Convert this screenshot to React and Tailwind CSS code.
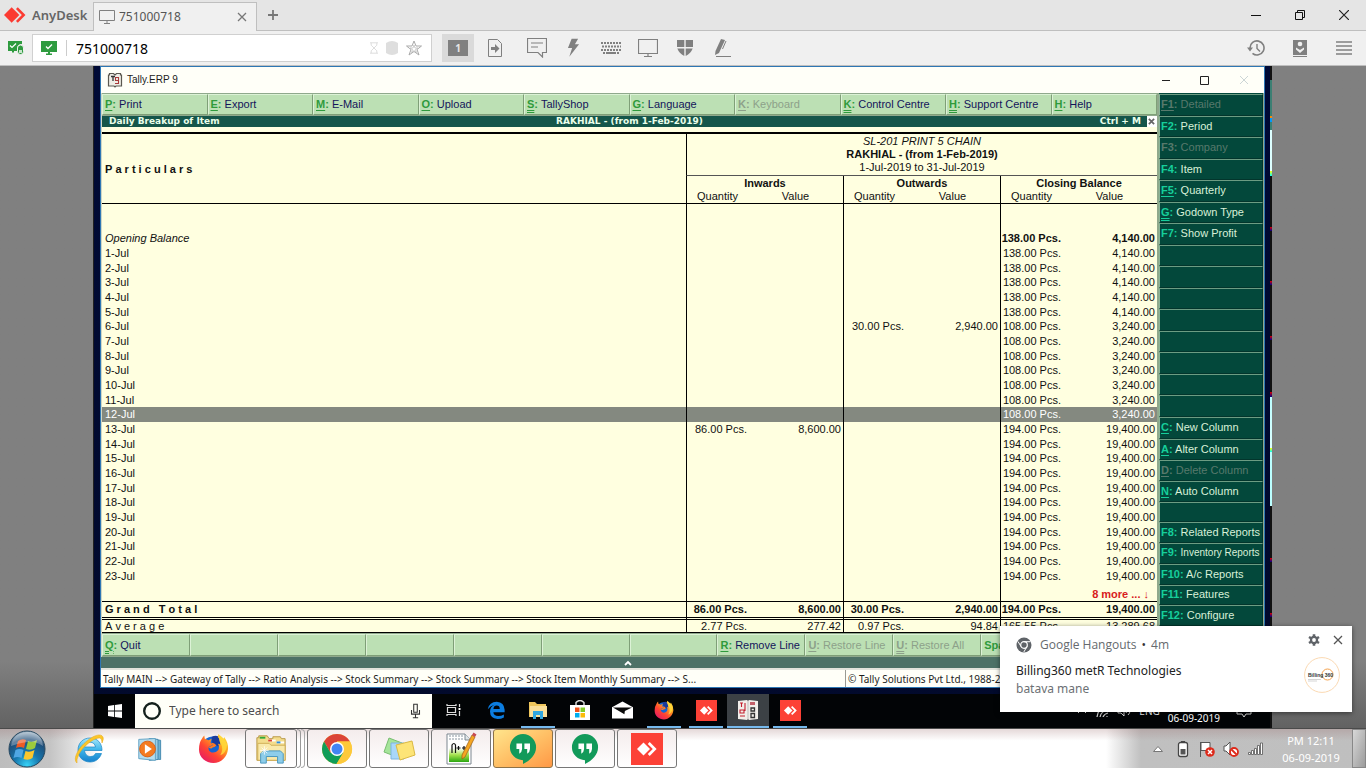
import React from 'react';

const AnyDeskMark = ({ className, fill = '#fff' }) => (
  <svg viewBox="0 0 24 16" className={className} aria-hidden="true">
    <path d="M8 0l8 8-8 8-8-8z" fill={fill} />
    <path d="M12.5 1.8L14.4 0l8 8-8 8-1.9-1.8L18.6 8z" fill={fill} />
  </svg>
);

const AnyDeskTile = ({ className }) => (
  <svg viewBox="0 0 32 32" className={className} aria-hidden="true">
    <rect width="32" height="32" fill="#fc4136" />
    <path d="M12.5 9.5L19 16l-6.500 6.500L6 16z" fill="#fff" />
    <path d="M16.800 11l1.900-1.900 6.900 6.900-6.900 6.900-1.900-1.900 5-5z" fill="#fff" />
  </svg>
);

const Firefox = ({ className, id }) => (
  <svg viewBox="0 0 32 32" className={className} aria-hidden="true">
    <defs>
      <linearGradient id={id} x1="1" y1="0" x2="0.15" y2="1">
        <stop offset="0" stopColor="#fff04a" />
        <stop offset="0.35" stopColor="#ffa51f" />
        <stop offset="0.65" stopColor="#ff4531" />
        <stop offset="1" stopColor="#e4156b" />
      </linearGradient>
    </defs>
    <circle cx="15.500" cy="15" r="11.500" fill="#1464d2" />
    <path d="M14 4q6-3 11 2l-4 8-6-3z" fill="#1a3b9c" />
    <path d="M4 6q1-2 2.500-3.500L7 6l4 1.500 3-1.500-1 4 2.500 2-4.500 2.500q-1 4 3 5.500 4 1 7-2.500 1.500-4-.5-6.500 1.500 0 2.500 1Q23 6 20.500 4.500L21 1q3 3 5.500 5l.5-2q4.500 6 4 12.500C30 25 24 31 16 31S1 25 1 17Q1 10 4 6z" fill={`url(#${id})`} />
    <path d="M11 15l4.500-2.500-2-2.500q4 0 5.500 3-2 2-4 2-1 2-4 0z" fill="#ff7a22" />
    <path d="M22 2q5 3 8 10-1 9-7 11 4-7 0-13-2-3-1-8z" fill="#ffd93b" opacity=".85" />
  </svg>
);

const EdgeE = ({ className }) => (
  <svg viewBox="0 0 24 24" className={className} aria-hidden="true">
    <path d="M1 11Q3 1 13 1q10 1 10.500 10.500V15H8.500q.5 5 6.500 5 4 0 7.500-2v4Q19 24 14 24 4 23 4 14q0-6 6-9-5 1-9 6zm7.500-.5H17q0-4.500-4-4.500t-4.500 4.500z" fill="#0b7de0" />
  </svg>
);

const IE = () => (
  <svg viewBox="0 0 32 32" className="h-8 w-8" aria-hidden="true">
    <defs>
      <linearGradient id="ieBlue" x1="0" y1="0" x2="0" y2="1">
        <stop offset="0" stopColor="#a8e8fb" />
        <stop offset="0.5" stopColor="#3bb4e9" />
        <stop offset="1" stopColor="#1681cd" />
      </linearGradient>
    </defs>
    <path d="M17 5c7.500 0 12 5 12 12.500H11.500c.5 4 3 6 6 6 2.500 0 4-1 5-3h6c-2 5.500-6 8.500-11.500 8.500C10 29 5 24 5 17S10 5 17 5zm-5.500 9h11c-.5-3-2.500-4.800-5.500-4.800s-5 1.800-5.500 4.800z" fill="url(#ieBlue)" stroke="#1a87c6" strokeWidth=".7" />
    <path d="M4 30C-1 26 6 14 14 8 21 2 28 0 30 4q1 2-1 6 0-4-2-5C22 4 10 13 6 21q-3 6-2 9z" fill="#fbc62a" stroke="#e6a413" strokeWidth=".5" />
  </svg>
);

const MediaPlayer = () => (
  <svg viewBox="0 0 32 32" className="h-7 w-7" aria-hidden="true">
    <path d="M17 5l10 1v22l-10-1z" fill="#6fb3d4" stroke="#3c83aa" />
    <path d="M14 4l10 1v23l-10 1z" fill="#9ccde4" stroke="#3c83aa" />
    <path d="M2 5l19-1v25L2 27z" fill="#b4dcee" stroke="#5a9dbf" />
    <circle cx="12" cy="16" r="9" fill="#f47b20" stroke="#d75d10" />
    <path d="M9 10.500l8 5.500-8 5.500z" fill="#fff" />
  </svg>
);

const Folder = ({ className }) => (
  <svg viewBox="0 0 34 34" className={className} aria-hidden="true">
    <path d="M2 29V5h2V3h9l2 3h4V4h8l1 2h4v23z" fill="#f3dc8c" stroke="#b89643" />
    <path d="M5 4h6v2H5z" fill="#31a93b" />
    <path d="M14 7h8v2h-8z" fill="#fff" /><path d="M14 7h4v2h-4z" fill="#d9432f" />
    <path d="M23 9h8v2h-8z" fill="#fff" /><path d="M23 9h4v2h-4z" fill="#2d8bdb" />
    <path d="M3 11h12l2 2h15v16H3z" fill="#f9e9ab" stroke="#cfae55" />
    <path d="M6 32V22l3-3h18l3 3v10h-6v-7H12v7z" fill="#8dcdea" stroke="#4594bd" />
    <path d="M10 14v9M5.500 18.500h9M7 15.500l6 6M13 15.500l-6 6" stroke="#fff" strokeWidth=".8" />
  </svg>
);

const FlatFolder = () => (
  <svg viewBox="0 0 20 18" className="h-[18px] w-5" aria-hidden="true">
    <path d="M1 16V1h6l2 2h9v13z" fill="#efc65c" />
    <path d="M2 5h17v11H2z" fill="#fbe09a" />
    <path d="M5 18v-8h10v8h-3v-4H8v4z" fill="#31a6df" />
  </svg>
);

const Chrome = () => (
  <svg viewBox="0 0 32 32" className="h-8 w-8" aria-hidden="true">
    <circle cx="16" cy="16" r="15" fill="#fdc93b" />
    <path d="M16 16L9.500 19.700 3 8.500A15 15 0 0 1 29 8.500H16z" fill="#db4437" />
    <path d="M3 8.500A15 15 0 0 0 15.500 31L22.500 19.500 16 16 9.500 19.700z" fill="#109d58" />
    <path d="M29 8.500H16v7l6.500 4L15.500 31A15 15 0 0 0 29 8.500z" fill="#fdc93b" />
    <circle cx="16" cy="16" r="7" fill="#fff" />
    <circle cx="16" cy="16" r="5.500" fill="#4285f4" />
  </svg>
);

const Notes = () => (
  <svg viewBox="0 0 34 28" className="h-7 w-[34px]" aria-hidden="true">
    <path d="M7 3l13 5-5 14L2 17z" fill="#a5e49a" stroke="#78bd70" />
    <path d="M9 8h13v16H9z" fill="#a9d7fa" stroke="#7fb5de" />
    <path d="M14 10l16-4 3 14-15 5z" fill="#fde477" stroke="#dbb943" />
  </svg>
);

const Notepad = () => (
  <svg viewBox="0 0 32 34" className="h-[34px] w-8" aria-hidden="true">
    <defs>
      <linearGradient id="nppGreen" x1="0" y1="0" x2="0" y2="1">
        <stop offset="0.3" stopColor="#fff" />
        <stop offset="0.65" stopColor="#a4e04c" />
        <stop offset="1" stopColor="#2aa611" />
      </linearGradient>
    </defs>
    <path d="M2 2h18l6 6v24H2z" fill="#fff" stroke="#7d8790" />
    <path d="M4 10h20v20H4z" fill="url(#nppGreen)" />
    <path d="M4 4h14M4 7h15" stroke="#8995a0" strokeDasharray="2 1" />
    <path d="M20 2v6h6" fill="#dfe5e8" stroke="#7d8790" />
    <path d="M7 21V13q2-3 3.500 0v8M11.500 16h4M13.500 14v4M17 16h4M19 14v4" fill="none" stroke="#111" strokeWidth="1.200" />
    <path d="M27 3l3 2-10 20-3 2v-4z" fill="#f5a623" stroke="#9b5d13" strokeWidth=".7" />
    <path d="M27 3l1.500-2.500 3 2L30 5z" fill="#c74a52" />
  </svg>
);

const Hangouts = () => (
  <svg viewBox="0 0 30 34" className="h-8 w-7" aria-hidden="true">
    <path d="M15 1a14 14 0 0 1 14 14c0 8-6 14-14 18v-4A14 14 0 0 1 15 1z" fill="#129a5a" />
    <path d="M8 11h6v6q0 3-3 5v-5H8zM16.500 11h6v6q0 3-3 5v-5h-3z" fill="#fff" />
  </svg>
);

const StartOrb = () => (
  <svg viewBox="0 0 38 38" className="h-[38px] w-[38px]" aria-hidden="true">
    <defs>
      <radialGradient id="orb" cx="0.5" cy="0.95" r="0.9">
        <stop offset="0" stopColor="#37d3f7" />
        <stop offset="0.4" stopColor="#1676ad" />
        <stop offset="0.8" stopColor="#1f4d78" />
        <stop offset="1" stopColor="#91a9bd" />
      </radialGradient>
    </defs>
    <circle cx="19" cy="19" r="18" fill="url(#orb)" stroke="#27485f" />
    <path d="M10 11q4-3 8-1l-2 8q-4-2-8 0z" fill="#ee5a24" />
    <path d="M20 11q4 2 9-1l-2 8q-4 3-9 1z" fill="#9bcb3c" />
    <path d="M7.500 20q4-2 8 0l-2 8q-4-2-8 0z" fill="#4fa6e3" />
    <path d="M17.500 21q4 2 9-1l-2 8q-4 3-9 1z" fill="#fcc62c" />
    <path d="M3 16Q5 3 19 2t16 14Q27 11 19 12T3 16z" fill="#fff" opacity=".3" />
  </svg>
);

const BookIcon = ({ className }) => (
  <svg viewBox="0 0 16 16" className={className} aria-hidden="true">
    <path d="M1.500 3h1V1.500h4L8 3l1.500-1.500h4V3h1v11H9l-1 1-1-1H1.500z" fill="#efeee6" stroke="#5a5850" strokeWidth="1.200" />
    <path d="M4 4.500h4M6 4.500V9" stroke="#333" strokeWidth="1.300" fill="none" />
    <path d="M11.500 8.500V5.500h-3v3h3v3H8" stroke="#a83a3a" strokeWidth="1.100" fill="none" />
  </svg>
);

const topKeys = [
  ['P', 'Print', 1], ['E', 'Export', 1], ['M', 'E-Mail', 1], ['O', 'Upload', 1], ['S', 'TallyShop', 2],
  ['G', 'Language', 1], ['K', 'Keyboard', 1, true], ['K', 'Control Centre', 2], ['H', 'Support Centre', 2], ['H', 'Help', 1],
];
const bottomKeys = [
  ['Q', 'Quit', 2], null, null, null, null, null, null, ['R', 'Remove Line', 1],
  ['U', 'Restore Line', 1, true], ['U', 'Restore All', 2, true], ['Space', '', 0], null,
];
const sideUpper = [
  ['F1', 'Detailed', 1, true], ['F2', 'Period', 0], ['F3', 'Company', 0, true], ['F4', 'Item', 0], ['F5', 'Quarterly', 1],
  ['G', 'Godown Type', 2], ['F7', 'Show Profit', 0], null, null, null, null, null, null, null, null,
  ['C', 'New Column', 1], ['A', 'Alter Column', 1],
];
const sideLower = [
  ['D', 'Delete Column', 1, true], ['N', 'Auto Column', 1], null, ['F8', 'Related Reports', 0],
  ['F9', 'Inventory Reports', 0], ['F10', 'A/c Reports', 0], ['F11', 'Features', 0], ['F12', 'Configure', 0],
];

const lines = ['', 'underline underline-offset-2', 'underline decoration-double underline-offset-2'];

function BarKey({ item }) {
  const [key, label, under, off] = item || [];
  return (
    <button disabled={!item || off} aria-label={item ? undefined : 'Unassigned'} className="flex min-w-0 flex-1 basis-0 items-center overflow-hidden whitespace-nowrap border-y border-l border-r border-t-[#dcf2d6] border-l-[#dcf2d6] border-r-[#7f9f78] border-b-[#7f9f78] bg-[#bce0b4] pb-px pl-[2px] text-left">
      {item && (
        <span className={off ? 'text-[#8da08a]' : 'text-[#14145a]'}>
          <span className={off ? 'font-bold' : 'font-bold text-[#2f9a3c]'}><span className={lines[under]}>{key}</span>:</span> {label}
        </span>
      )}
    </button>
  );
}

function SideKey({ item }) {
  const [key, label, under, off] = item || [];
  return (
    <button disabled={!item || off} aria-label={item ? undefined : 'Unassigned'} className="flex min-h-0 flex-1 basis-0 items-center overflow-hidden whitespace-nowrap border border-t-[#6c9c83] border-l-[#8ab598] border-r-[#02352c] border-b-[#02352c] bg-[#03483b] pb-px pl-px text-left">
      {item && (
        <span className={off ? 'text-[#57796c]' : 'text-[#d8f0d8]'}>
          <span className={off ? 'font-bold' : 'font-bold text-[#16cf9b]'}><span className={lines[under]}>{key}</span>:</span>{' '}
          <span className={label.length > 16 ? 'text-[10px]' : undefined}>{label}</span>
        </span>
      )}
    </button>
  );
}

const days = Array.from({ length: 23 }, (_, i) => {
  const d = i + 1;
  return {
    date: `${d}-Jul`,
    inQ: d === 13 ? '86.00 Pcs.' : '', inV: d === 13 ? '8,600.00' : '',
    outQ: d === 6 ? '30.00 Pcs.' : '', outV: d === 6 ? '2,940.00' : '',
    clQ: d < 6 ? '138.00 Pcs.' : d < 13 ? '108.00 Pcs.' : '194.00 Pcs.',
    clV: d < 6 ? '4,140.00' : d < 13 ? '3,240.00' : '19,400.00',
    active: d === 12,
  };
});

function Cells({ values }) {
  return values.map((v, i) => (
    <td key={i} className={i % 2 === 0 ? 'border-l border-black pr-px' : 'pr-[2px]'}>{v}</td>
  ));
}

function Report() {
  return (
    <table className="w-full table-fixed border-separate border-spacing-0 whitespace-nowrap text-right [&_td]:py-0 [&_th]:p-0">
      <colgroup>
        <col />
        <col className="w-[62px]" /><col className="w-[95px]" />
        <col className="w-[62px]" /><col className="w-[95px]" />
        <col className="w-[62px]" /><col className="w-[95px]" />
      </colgroup>
      <thead className="text-center">
        <tr className="h-[42px]">
          <th rowSpan="3" className="border-b border-black text-left"><span className="pl-[3px]">P&nbsp;a&nbsp;r&nbsp;t&nbsp;i&nbsp;c&nbsp;u&nbsp;l&nbsp;a&nbsp;r&nbsp;s</span></th>
          <th colSpan="6" className="border-b border-l border-b-[#555] border-l-black font-normal leading-[13px]">
            <div className="italic">SL-201 PRINT 5 CHAIN</div>
            <div className="font-bold">RAKHIAL - (from 1-Feb-2019)</div>
            <div>1-Jul-2019 to 31-Jul-2019</div>
          </th>
        </tr>
        <tr className="h-[14px]">
          <th colSpan="2" className="border-l border-black">Inwards</th>
          <th colSpan="2" className="border-l border-black">Outwards</th>
          <th colSpan="2" className="border-l border-black">Closing Balance</th>
        </tr>
        <tr className="h-[14px] leading-[13px]">
          {[0, 1, 2].map((n) => (
            <React.Fragment key={n}>
              <th className="border-b border-l border-black font-normal">Quantity</th>
              <th className="border-b border-black font-normal">Value</th>
            </React.Fragment>
          ))}
        </tr>
      </thead>
      <tbody>
        <tr className="h-[27px]"><td /><Cells values={['', '', '', '', '', '']} /></tr>
      </tbody>
      <tbody className="align-top [&>tr]:h-[15px] [&>tr:nth-child(3n)]:h-[14px]">
        <tr className="font-bold">
          <td className="pl-[3px] text-left font-normal italic">Opening Balance</td>
          <Cells values={['', '', '', '', '138.00 Pcs.', '4,140.00']} />
        </tr>
        {days.map((r) => (
          <tr key={r.date} className={r.active ? 'bg-[#848980] text-white' : ''}>
            <td className="pl-[3px] text-left">{r.date}</td>
            <Cells values={[r.inQ, r.inV, r.outQ, r.outV, r.clQ, r.clV]} />
          </tr>
        ))}
      </tbody>
      <tfoot>
        <tr className="h-[19px] [&>td]:border-b [&>td]:border-b-black">
          <td />
          <Cells values={['', '', '', '']} />
          <td colSpan="2" className="border-l border-black pr-[8px] align-bottom font-bold text-[#d8201c]">8 more ... ↓</td>
        </tr>
        <tr className="h-[18px] align-top font-bold [&>td]:border-b-[3px] [&>td]:border-b-black [&>td]:[border-bottom-style:double]">
          <td className="pl-[3px] text-left">G&nbsp;r&nbsp;a&nbsp;n&nbsp;d&nbsp;&nbsp;&nbsp;T&nbsp;o&nbsp;t&nbsp;a&nbsp;l</td>
          <Cells values={['86.00 Pcs.', '8,600.00', '30.00 Pcs.', '2,940.00', '194.00 Pcs.', '19,400.00']} />
        </tr>
        <tr className="h-[13px] leading-[12px] [&>td]:border-b [&>td]:border-b-black">
          <td className="pl-[3px] text-left">A&nbsp;v&nbsp;e&nbsp;r&nbsp;a&nbsp;g&nbsp;e</td>
          <Cells values={['2.77 Pcs.', '277.42', '0.97 Pcs.', '94.84', '165.55 Pcs.', '13,289.68']} />
        </tr>
      </tfoot>
    </table>
  );
}

function TallyWindow() {
  return (
    <section className="ml-[6px] mr-[7px] flex flex-col border border-[#2e77b4] bg-[#fffff8]">
      <header className="flex h-[26px] items-center pl-[6px]">
        <BookIcon className="h-4 w-4" />
        <h1 className="pl-1 text-[10px] text-[#222]">Tally.ERP 9</h1>
        <div className="ml-auto flex">
          <button aria-label="Minimise" className="grid w-[39px] place-items-center"><svg viewBox="0 0 10 10" className="h-[10px] w-[10px]"><path d="M1 5.500h8" stroke="#222" /></svg></button>
          <button aria-label="Maximise" className="grid w-[39px] place-items-center"><svg viewBox="0 0 10 10" className="h-[10px] w-[10px]"><path d="M.5 1.500h8v8h-8z" fill="none" stroke="#222" /></svg></button>
          <button aria-label="Close" className="grid w-[40px] place-items-center"><svg viewBox="0 0 10 10" className="h-[10px] w-[10px]"><path d="M1 1l8 8M9 1l-8 8" stroke="#ccd6d6" /></svg></button>
        </div>
      </header>
      <div className="flex border-l border-[#cfd6c4] bg-[#8fa98c]">
        <div className="flex min-w-0 flex-1 flex-col">
          <nav aria-label="Actions" className="flex h-[23px] py-px">
            {topKeys.map((k, i) => <BarKey key={i} item={k} />)}
          </nav>
          <div className="grid h-[11px] grid-cols-3 items-center bg-[#15564a] font-['DejaVu_Sans'] text-[9px] font-bold leading-none text-[#eaffea]">
            <span className="pl-[7px]">Daily Breakup of Item</span>
            <span className="text-center">RAKHIAL - (from 1-Feb-2019)</span>
            <span className="flex items-center justify-end gap-[6px]">Ctrl + M
              <button aria-label="Close report" className="grid h-[11px] w-[10px] place-items-center bg-white"><svg viewBox="0 0 8 8" className="h-[7px] w-[7px]"><path d="M1 1l6 6M7 1L1 7" stroke="#666" strokeWidth="2" /></svg></button>
            </span>
          </div>
          <div className="bg-[#ffffe0] pt-[5px] text-[#111]">
            <div className="border-t-2 border-black"><Report /></div>
          </div>
          <nav aria-label="Line actions" className="flex h-[24px] py-px">
            {bottomKeys.map((k, i) => <BarKey key={i} item={k} />)}
          </nav>
        </div>
        <aside className="ml-[2px] mr-px flex w-[104px] flex-col bg-[#03483b] pt-px">
          <div className="flex h-[366px] flex-col">{sideUpper.map((k, i) => <SideKey key={i} item={k} />)}</div>
          <div className="flex h-[166px] flex-col">{sideLower.map((k, i) => <SideKey key={i} item={k} />)}</div>
          <SideKey />
        </aside>
      </div>
      <button aria-label="Expand panel" className="grid h-[11px] place-items-center bg-[#4d7267] pr-[110px]">
        <svg viewBox="0 0 8 6" className="h-[6px] w-2"><path d="M1 5l3-3 3 3" fill="none" stroke="#fff" strokeWidth="1.800" /></svg>
      </button>
      <footer className="flex h-[19px] items-center whitespace-nowrap border-t-2 border-[#e2e4dc] font-['Noto_Sans'] text-[10px] leading-[16px] text-[#1c1c1c]">
        <span className="min-w-0 flex-1 pl-[2px]">Tally MAIN --&gt; Gateway of Tally --&gt; Ratio Analysis --&gt; Stock Summary --&gt; Stock Summary --&gt; Stock Item Monthly Summary --&gt; S...</span>
        <span className="flex h-full w-[419px] items-center border-l border-[#9a9a94] pl-[2px]">© Tally Solutions Pvt Ltd., 1988-2017</span>
      </footer>
    </section>
  );
}

const Slot = ({ label, line, active, children }) => (
  <button aria-label={label} className={active ? 'flex h-full w-[42px] flex-col items-center bg-[#3c4145]' : 'flex h-full w-[42px] flex-col items-center'}>
    <span className="flex flex-1 items-center">{children}</span>
    <span className={line ? (active ? 'h-[2px] w-full bg-[#76b9ed]' : 'h-[2px] w-[34px] bg-[#76b9ed]') : 'h-[2px]'} />
  </button>
);

function RemoteTaskbar() {
  return (
    <div className="mr-[2px] mt-[6px] flex h-[34px] items-stretch bg-[#020406]">
      <button aria-label="Start" className="grid w-[41px] place-items-center">
        <svg viewBox="0 0 14 14" className="h-[14px] w-[14px]"><path d="M0 2l6-.9v5.500H0zM6.800 1L14 0v6.600H6.800zM0 7.400h6v5.500L0 12zM6.800 7.400H14V14l-7.200-1z" fill="#fff" /></svg>
      </button>
      <label className="mr-px flex w-[297px] items-center bg-[#fffff8] px-[7px]">
        <svg viewBox="0 0 20 20" className="h-5 w-5"><circle cx="10" cy="10" r="7.800" fill="none" stroke="#14201c" strokeWidth="2.400" /></svg>
        <input aria-label="Search" placeholder="Type here to search" className="min-w-0 flex-1 bg-transparent pl-[7px] font-['Noto_Sans'] text-[12px] text-[#444] outline-none placeholder:text-[#4c4c4c]" />
        <svg viewBox="0 0 12 18" className="mr-1 h-4 w-[11px]"><path d="M4 1.500h4v9H4zM1.500 8v4.500h9V8M6 12.500V16M3 16.500h6" fill="none" stroke="#333" strokeWidth="1.200" /></svg>
      </label>
      <Slot label="Task view">
        <svg viewBox="0 0 16 14" className="h-[14px] w-4"><path d="M1 1v1.500h9V1M1 13v-1.500h9V13M1.500 4.500h8v5h-8zM13.500 1v3M13.500 8v5" fill="none" stroke="#ddd" strokeWidth="1.200" /><path d="M12.500 5h2v2h-2z" fill="#fff" /></svg>
      </Slot>
      <Slot label="Edge"><EdgeE className="h-[18px] w-[18px]" /></Slot>
      <Slot label="File Explorer" line><FlatFolder /></Slot>
      <Slot label="Store">
        <svg viewBox="0 0 20 20" className="h-5 w-5"><path d="M6 5V2.500Q10-1.500 14 2.500V5" fill="none" stroke="#ddd" strokeWidth="1.400" /><path d="M0 5h20v15H0z" fill="#fff" /><path d="M5 7.500h4.500v4.500H5z" fill="#f1511b" /><path d="M10.500 7.500H15v4.500h-4.500z" fill="#80cc28" /><path d="M5 13h4.500v4.500H5z" fill="#00adef" /><path d="M10.500 13H15v4.500h-4.500z" fill="#fbbc09" /></svg>
      </Slot>
      <Slot label="Mail">
        <svg viewBox="0 0 22 18" className="h-[18px] w-[21px]"><path d="M0 6l11-6 11 6v12H0z" fill="#fff" /><path d="M1 6.500h20l-7.500 3.500-.5 3.500z" fill="#0a0a0a" /></svg>
      </Slot>
      <Slot label="Firefox" line><Firefox className="h-5 w-5" id="ffRemote" /></Slot>
      <Slot label="AnyDesk" line><AnyDeskTile className="h-[21px] w-[21px]" /></Slot>
      <Slot label="Tally" line active>
        <svg viewBox="0 0 20 20" className="h-5 w-5"><path d="M0 1l9-1 1 1 1-1 9 1v18l-9 1-1-1-1 1-9-1z" fill="#f1eeea" /><path d="M10 1v18" stroke="#bbb" /><path d="M2 3h3M3.500 3v4M2 10h4v3H2zM2 16h5M7 3v8" stroke="#c3202f" strokeWidth="1.100" fill="none" /><path d="M12 2h5v3h-5z" fill="#c3606a" /><path d="M13 8h3.500v3H13zM13 13.500h3.500v4H13z" fill="none" stroke="#333" strokeWidth="1.300" /></svg>
      </Slot>
      <Slot label="AnyDesk session" line><AnyDeskTile className="h-[21px] w-[21px]" /></Slot>
      <div className="ml-auto flex items-center gap-2 pr-[18px] font-['Noto_Sans'] text-[10px] leading-none text-white">
        <svg viewBox="0 0 10 6" className="h-[6px] w-[10px]"><path d="M1 5l4-4 4 4" fill="none" stroke="#fff" /></svg>
        <svg viewBox="0 0 14 12" className="h-3 w-[14px]"><path d="M2 12Q3 3 12 2M5 12q1-6 8-7M8 12q1-3 5-4M11 12h2" fill="none" stroke="#ddd" strokeWidth="1.200" /></svg>
        <svg viewBox="0 0 14 12" className="h-3 w-[14px]"><path d="M1 4h3l3-3v10L4 8H1zM9 4q2 2 0 4M11 2q4 4 0 8" fill="none" stroke="#ddd" /></svg>
        <span>ENG</span>
        <span className="self-end pb-[5px] pr-2">06-09-2019</span>
        <svg viewBox="0 0 16 14" className="h-[14px] w-4"><path d="M1 1h14v9h-5l-2 3-2-3H1z" fill="none" stroke="#ddd" /></svg>
      </div>
    </div>
  );
}

const ToolButton = ({ label, children, className = 'w-[37px]' }) => (
  <button aria-label={label} className={`grid h-7 place-items-center ${className}`}>{children}</button>
);

function TabBar() {
  return (
    <div className="flex h-[31px] items-stretch border-b border-[#bfbfbf] bg-[#e5e5e5]">
      <div className="flex w-[93px] items-center gap-[5px] pl-[4px] text-[13px] font-semibold text-[#666]">
        <AnyDeskMark className="h-4 w-[23px]" fill="#fb3b32" />AnyDesk
      </div>
      <div className="-mb-px mt-[2px] flex w-[164px] items-center border border-b-0 border-[#bfbfbf] bg-[#f0f0f0] pl-[5px] pr-[9px] text-[12px] text-[#555]">
        <svg viewBox="0 0 16 14" className="h-[14px] w-4"><path d="M.5.500h15v10H.5zM8 10.500v3M5 13.500h6" fill="none" stroke="#808080" /></svg>
        <span className="pl-1">751000718</span>
        <button aria-label="Close tab" className="ml-auto"><svg viewBox="0 0 10 10" className="h-[10px] w-[10px]"><path d="M1 1l8 8M9 1L1 9" stroke="#777" strokeWidth="1.300" /></svg></button>
      </div>
      <button aria-label="New tab" className="pl-[11px]"><svg viewBox="0 0 10 10" className="h-[10px] w-[10px]"><path d="M5 0v10M0 5h10" stroke="#777" strokeWidth="1.800" /></svg></button>
      <div className="ml-auto flex">
        <button aria-label="Minimise" className="grid w-[44px] place-items-center"><svg viewBox="0 0 10 10" className="h-[10px] w-[10px]"><path d="M0 5.500h10" stroke="#111" /></svg></button>
        <button aria-label="Restore" className="grid w-[44px] place-items-center"><svg viewBox="0 0 10 10" className="h-[10px] w-[10px]"><path d="M.5 2.500h7v7h-7zM2.500 2V.500h7v7H8" fill="none" stroke="#111" /></svg></button>
        <button aria-label="Close" className="grid w-[44px] place-items-center"><svg viewBox="0 0 10 10" className="h-[10px] w-[10px]"><path d="M0 0l10 10M10 0L0 10" stroke="#222" strokeWidth="1.200" /></svg></button>
      </div>
    </div>
  );
}

function AddressBar() {
  return (
    <div className="flex h-[35px] items-center border-b border-[#bfbfbf] bg-[#f0f0f0]">
      <svg viewBox="0 0 16 14" className="ml-2 h-[14px] w-4"><path d="M0 0h14v3q-5 0-5 5v2H6v1.500H4V10H0z" fill="#2e9b3f" /><path d="M2 4.500l2 2 4-4" fill="none" stroke="#fff" strokeWidth="1.200" /><rect x="9.500" y="4" width="6" height="9.500" rx="3" fill="#2e9b3f" stroke="#f0f0f0" /><rect x="11" y="9" width="3" height="3" fill="#c7e5cb" /></svg>
      <label className="ml-2 flex h-7 w-[400px] items-center border border-[#d0d0d0] bg-white pl-2">
        <svg viewBox="0 0 16 14" className="h-[14px] w-4"><path d="M0 0h16v11H9v1.500h2V14H5v-1.500h2V11H0z" fill="#2e9b3f" /><path d="M5 5.500l2 2 4-4" fill="none" stroke="#fff" strokeWidth="1.300" /></svg>
        <span className="ml-[9px] h-4 w-px bg-[#ccc]" />
        <input aria-label="Remote address" defaultValue="751000718" className="ml-[9px] min-w-0 flex-1 bg-transparent text-[14px] text-black outline-none" />
        <svg viewBox="0 0 10 14" className="h-[14px] w-2"><path d="M0 .5h10M0 13.500h10M1.500.500v3L5 7l3.500-3.500v-3M1.500 13.500v-3L5 7l3.500 3.500v3" fill="none" stroke="#ddd" strokeWidth="1.200" /></svg>
        <svg viewBox="0 0 12 14" className="ml-2 h-[14px] w-3"><path d="M0 2q6-4 12 0v10q-6 4-12 0z" fill="#dedede" /></svg>
        <svg viewBox="0 0 16 16" className="ml-2 mr-[9px] h-4 w-4"><path d="M8 1l2 5h5.500L11 9.500l2 5.500-5-3.500L3 15l2-5.500L.5 6H6z" fill="none" stroke="#aaa" /><path d="M8 5l1 3h3l-2.500 1.500 1 3L8 10.500l-2.500 2 1-3L4 8h3z" fill="none" stroke="#bbb" strokeWidth=".7" /></svg>
      </label>
      <ToolButton label="Display 1" className="ml-[10px] w-8 bg-[#dadada]"><span className="grid h-4 w-5 place-items-center bg-[#808080] text-[10px] font-bold leading-none text-[#e6e6e6]">1</span></ToolButton>
      <ToolButton label="Transfer file" className="w-[42px]"><svg viewBox="0 0 14 18" className="h-[18px] w-[14px]"><path d="M.5.500h9l4 4v13H.5z" fill="none" stroke="#808080" /><path d="M3 8h4V5l4.500 4.500L7 14v-3H3z" fill="#808080" /></svg></ToolButton>
      <ToolButton label="Chat" className="w-[41px]"><svg viewBox="0 0 20 20" className="h-5 w-5"><path d="M.5.500h19v14h-4V19l-4.500-4.500H.5zM4 5h12M4 9h7" fill="none" stroke="#808080" strokeWidth="1.200" /></svg></ToolButton>
      <ToolButton label="Actions" className="w-[33px]"><svg viewBox="0 0 14 20" className="h-5 w-[13px]"><path d="M5 0h7L8.500 6H13L2.500 19.500 5.500 10H1z" fill="#808080" /></svg></ToolButton>
      <ToolButton label="Keyboard" className="w-[41px]"><svg viewBox="0 0 20 12" className="h-3 w-5"><path d="M0 1h20M1 4.500h19M0 8h20" stroke="#808080" strokeWidth="2" strokeDasharray="2 1" /><path d="M2 11h2M5 11h10M16 11h2" stroke="#808080" strokeWidth="2" /></svg></ToolButton>
      <ToolButton label="Display settings" className="w-[33px]"><svg viewBox="0 0 20 18" className="h-[18px] w-5"><path d="M.5.500h19v14H.5zM10 14.500v3M6 17.500h8" fill="none" stroke="#808080" strokeWidth="1.200" /></svg></ToolButton>
      <ToolButton label="Permissions" className="w-[41px]"><svg viewBox="0 0 16 16" className="h-4 w-4"><path d="M0 0h7.300v7H0zM8.700 0H16v7H8.700zM.3 8.500h7V16Q2 13 .3 8.500zM8.700 8.500h7Q14 13 8.700 16z" fill="#808080" /></svg></ToolButton>
      <ToolButton label="Whiteboard" className="w-[36px]"><svg viewBox="0 0 16 20" className="h-5 w-4"><path d="M6 1l4 1-6 13-4 2 .5-4z" fill="#808080" /><path d="M11 3L7.500 11" stroke="#808080" fill="none" /><path d="M1 18.500h15" stroke="#808080" /></svg></ToolButton>
      <div className="ml-auto flex">
        <ToolButton label="History" className="w-[44px]"><svg viewBox="0 0 18 16" className="h-4 w-[18px]"><path d="M3 8a7 7 0 1 1 2.500 5.300" fill="none" stroke="#808080" strokeWidth="1.600" /><path d="M0 7.500h6L3 11.500z" fill="#808080" /><path d="M10 4v4.500l3 3" fill="none" stroke="#808080" strokeWidth="1.400" /></svg></ToolButton>
        <ToolButton label="Downloads" className="w-[44px]"><svg viewBox="0 0 14 17" className="h-[17px] w-[14px]"><path d="M0 0h14v15H0zM0 16h14v1H0z" fill="#808080" /><circle cx="7" cy="4" r="2.300" fill="#f0f0f0" /><path d="M3 7.500l4 2.500 4-2.500v2L7 13 3 9.500z" fill="#f0f0f0" /></svg></ToolButton>
        <ToolButton label="Menu" className="w-[44px]"><svg viewBox="0 0 16 14" className="h-[14px] w-4"><path d="M0 1h16M0 5h16M0 9h16M0 13h16" stroke="#808080" strokeWidth="1.700" /></svg></ToolButton>
      </div>
    </div>
  );
}

const AppButton = ({ label, open, hot, children }) => {
  const look = hot
    ? 'border border-[#8d7248] rounded-[3px] bg-gradient-to-br from-[#ffe58c] via-[#ffc066] to-[#ff9845]'
    : open ? 'border border-[#777] rounded-[3px] bg-gradient-to-b from-[#f4ecec] to-white' : '';
  return <button aria-label={label} className={`grid h-[39px] w-[60px] place-items-center ${look}`}>{children}</button>;
};

function LocalTaskbar() {
  return (
    <div className="flex h-10 items-stretch border-t border-[#4a4a4a] bg-[linear-gradient(to_bottom,rgba(150,100,100,0.25),rgba(255,255,255,0)_30%),linear-gradient(to_right,#bdbdbd,#c4c4c4_50px,#fff_100px,#fff_calc(100%-260px),#c0c0c0_calc(100%-225px),#bfbfbf)]">
      <button aria-label="Start menu" className="grid w-[54px] place-items-center"><StartOrb /></button>
      <div className="flex gap-[2px] pl-[5px]">
        <AppButton label="Internet Explorer"><IE /></AppButton>
        <AppButton label="Media Player"><MediaPlayer /></AppButton>
        <AppButton label="Firefox"><Firefox className="h-[31px] w-[31px]" id="ffLocal" /></AppButton>
        <div className="flex h-[39px] w-[60px]">
          <button aria-label="Explorer windows" className="grid w-[52px] place-items-center rounded-[3px] border border-[#777] bg-gradient-to-b from-[#f4ecec] to-white"><Folder className="h-8 w-8" /></button>
          <span className="w-1 rounded-r border-y border-r border-[#999]" />
          <span className="w-1 rounded-r border-y border-r border-[#aaa]" />
        </div>
        <AppButton label="Chrome" open><Chrome /></AppButton>
        <AppButton label="Sticky Notes" open><Notes /></AppButton>
        <AppButton label="Notepad++" open><Notepad /></AppButton>
        <AppButton label="Hangouts chat" open hot><Hangouts /></AppButton>
        <AppButton label="Hangouts" open><Hangouts /></AppButton>
        <AppButton label="AnyDesk" open><AnyDeskTile className="h-8 w-8" /></AppButton>
      </div>
      <div className="ml-auto flex items-center">
        <div className="flex items-center gap-2 pr-[6px]">
          <svg viewBox="0 0 10 6" className="mr-1 h-[6px] w-[10px]"><path d="M5 .5L9.500 5.500h-9z" fill="#fff" stroke="#777" /></svg>
          <svg viewBox="0 0 16 18" className="h-[18px] w-4"><rect x="3.500" y="2.500" width="9" height="14" rx="2" fill="#fff" stroke="#444" strokeWidth="1.300" /><path d="M6 1h4v1.500H6z" fill="#444" /><path d="M5.500 9h5v5.500h-5z" fill="#555" /></svg>
          <svg viewBox="0 0 16 18" className="h-[18px] w-4"><path d="M1.500 2v15M2 2.500h9v8H2z" fill="#fff" stroke="#555" /><circle cx="11" cy="12" r="4.800" fill="#dd2a1b" /><path d="M9 10l4 4M13 10l-4 4" stroke="#fff" strokeWidth="1.500" /></svg>
          <svg viewBox="0 0 16 18" className="h-[18px] w-4"><path d="M1 6h2l4-4v13l-4-4H1z" fill="#fff" stroke="#555" /><circle cx="11" cy="12" r="4" fill="#fff" stroke="#dd2a1b" strokeWidth="1.800" /><path d="M8.500 9.500l5 5" stroke="#dd2a1b" strokeWidth="1.800" /></svg>
          <svg viewBox="0 0 17 14" className="h-[14px] w-[17px]"><path d="M1.500 10.500h2v2h-2zM4.500 8.500h2v4h-2zM7.500 6.500h2v6h-2zM10.500 3.500h2v9h-2zM13.500 1h2v11.500h-2z" fill="#fff" stroke="#555" strokeWidth=".8" /></svg>
        </div>
        <div className="w-[82px] text-center text-[11px] leading-[17px] text-white"><div>PM 12:11</div><div>06-09-2019</div></div>
        <button aria-label="Show desktop" className="h-full w-[14px] border border-[#888] bg-gradient-to-br from-[#d8d8d8] to-[#9c9c9c]" />
      </div>
    </div>
  );
}

function Toast() {
  return (
    <div role="status" className="absolute bottom-14 right-[14px] flex h-[86px] w-[352px] bg-white pl-4 pr-2 shadow-[0_1px_5px_rgba(0,0,0,0.5)]">
      <div className="flex-1 pt-[9px]">
        <div className="flex items-center gap-2 text-[12px] leading-[20px] text-[#666a6e]">
          <svg viewBox="0 0 16 16" className="h-4 w-4"><circle cx="8" cy="8" r="7.500" fill="#5f6368" /><circle cx="8" cy="8" r="3.300" fill="none" stroke="#fff" strokeWidth="1.200" /><path d="M8 4.700h6.500M5 9.500L2 4.500M11 9.500L7.800 15" stroke="#fff" /></svg>
          <span className="flex gap-[5px] font-['Open_Sans']"><span>Google Hangouts</span><span className="text-[#333]">•</span><span>4m</span></span>
        </div>
        <div className="pt-[6px] text-[12px] leading-[19px] text-[#222]">Billing360 metR Technologies</div>
        <div className="text-[12px] leading-[18px] text-[#6c7074]">batava mane</div>
      </div>
      <div className="flex w-10 flex-col items-start pt-2">
        <div className="flex gap-[12px] self-end pb-[11px]">
          <button aria-label="Settings"><svg viewBox="0 0 12 12" className="h-3 w-3"><path d="M6 .2v11.600M1 3l10 6M11 3L1 9" stroke="#5f6368" strokeWidth="2.600" /><circle cx="6" cy="6" r="4.200" fill="#5f6368" /><circle cx="6" cy="6" r="1.900" fill="#fff" /></svg></button>
          <button aria-label="Dismiss"><svg viewBox="0 0 12 12" className="h-3 w-3"><path d="M2 2l8 8M10 2l-8 8" stroke="#555" strokeWidth="1.300" /></svg></button>
        </div>
        <svg viewBox="0 0 36 36" className="h-9 w-9" role="img" aria-label="Billing 360">
          <circle cx="18" cy="18" r="17.400" fill="#fff" stroke="#fbd9b2" />
          <circle cx="23.500" cy="17.500" r="5.500" fill="none" stroke="#f5a04a" />
          <text x="4" y="19.500" fontSize="5" fontWeight="bold" fontFamily="Liberation Sans, sans-serif" fill="#333">Billing 360</text>
          <path d="M4 22.500h13M4 24h9" stroke="#bbb" strokeWidth=".6" />
        </svg>
      </div>
    </div>
  );
}

export default function App() {
  return (
    <div className="relative flex min-h-screen w-full flex-col overflow-hidden bg-[#808080] font-['Noto_Sans',sans-serif] leading-[14px]">
      <TabBar />
      <AddressBar />
      <main className="flex-1 bg-gradient-to-t from-[#626262] via-[#808080] via-10% to-[#808080] px-[93px]">
        <div className="mr-px flex h-full border-l border-[#222] bg-gradient-to-b from-[#000a36] to-[#020a2c]">
          <div className="-mr-[2px] flex min-w-0 flex-1 flex-col font-['Liberation_Sans',sans-serif] text-[11px] leading-[14px]">
            <TallyWindow />
            <RemoteTaskbar />
          </div>
          <div aria-hidden="true" className="w-[2px] bg-[linear-gradient(to_bottom,#111_14px,#3b7f73_14px,#3b7f73_50px,#f80_50px,#f80_52px,#09f_52px,#09f_56px,#3b7f73_56px,#3b7f73_64px,#dff_64px,#dff_105px,#ff0_105px,#0ff_110px,#111_110px,#111_161px,#d00_161px,#008_165px,#111_165px,#111_215px,#d00_215px,#008_219px,#111_219px,#111_270px,#d00_270px,#008_274px,#111_274px,#111_326px,#d00_326px,#008_331px,#bff_331px,#dff_382px,#ff0_382px,#0ff_386px,#bff_386px,#bff_440px,#111_440px,#111_492px,#d00_492px,#008_496px,#111_496px,#111_547px,#d00_547px,#008_551px,#111_551px)]" />
        </div>
      </main>
      <LocalTaskbar />
      <Toast />
    </div>
  );
}
